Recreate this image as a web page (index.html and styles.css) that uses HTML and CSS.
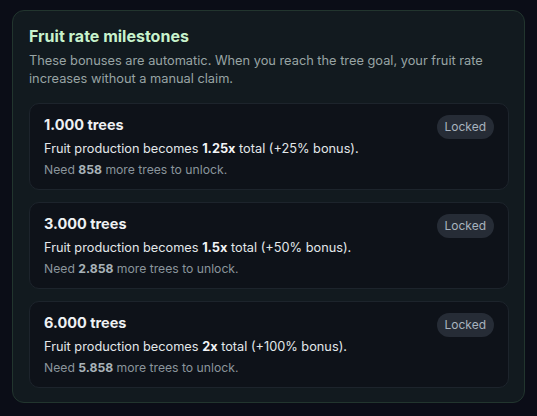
FILE: index.html
```html
<!DOCTYPE html>
<html>
<head>
<meta charset="utf-8">
<link rel="stylesheet" href="styles.css">
</head>
<body>
<section class="panel">
  <h2 class="title">Fruit rate milestones</h2>
  <p class="desc">These bonuses are automatic. When you reach the tree goal, your fruit rate increases without a manual claim.</p>
  <div class="list">
    <div class="item">
      <div class="item-head">
        <div class="item-title">1.000 trees</div>
        <span class="badge">Locked</span>
      </div>
      <div class="item-text">Fruit production becomes <b>1.25x</b> total (+25% bonus).</div>
      <div class="item-need">Need <b>858</b> more trees to unlock.</div>
    </div>
    <div class="item">
      <div class="item-head">
        <div class="item-title">3.000 trees</div>
        <span class="badge">Locked</span>
      </div>
      <div class="item-text">Fruit production becomes <b>1.5x</b> total (+50% bonus).</div>
      <div class="item-need">Need <b>2.858</b> more trees to unlock.</div>
    </div>
    <div class="item">
      <div class="item-head">
        <div class="item-title">6.000 trees</div>
        <span class="badge">Locked</span>
      </div>
      <div class="item-text">Fruit production becomes <b>2x</b> total (+100% bonus).</div>
      <div class="item-need">Need <b>5.858</b> more trees to unlock.</div>
    </div>
  </div>
</section>
</body>
</html>
```

FILE: styles.css
```css
html, body {
  margin: 0;
  padding: 0;
  background: #0b0d17;
}
body {
  padding: 10px 12px;
  font-family: Inter, "Noto Sans", sans-serif;
}
.panel {
  box-sizing: border-box;
  width: 513px;
  border: 1px solid #22352e;
  border-radius: 12px;
  background: #121a1f;
  padding: 15px 15px 14px 16px;
}
.title {
  margin: 0;
  font-size: 16px;
  font-weight: 700;
  color: #c8f2cc;
  line-height: 20px;
}
.desc {
  margin: 6px 0 15px;
  font-size: 12.8px;
  line-height: 18px;
  color: #98a4a4;
}
.list {
  display: flex;
  flex-direction: column;
  gap: 12px;
}
.item {
  border: 1px solid #1d242c;
  border-radius: 10px;
  background: #0e1219;
  padding: 11px 14px 11px 14px;
  height: 87px;
  box-sizing: border-box;
}
.item-head {
  display: flex;
  justify-content: space-between;
  align-items: flex-start;
  height: 20px;
}
.item-title {
  font-size: 14.5px;
  font-weight: 700;
  color: #eef1f3;
  line-height: 20px;
}
.badge {
  background: #262c36;
  color: #a8b3bf;
  font-size: 12px;
  line-height: 24px;
  padding: 0 8px;
  border-radius: 12px;
}
.item-text {
  font-size: 12.75px;
  color: #e2e7ea;
  line-height: 20px;
  margin-top: 4px;
}
.item-text b { font-weight: 700; color: #f2f4f6; }
.item-need {
  font-size: 12.2px;
  color: #8a959c;
  line-height: 21px;
}
.item-need b { font-weight: 700; color: #a8b2b8; }
```
